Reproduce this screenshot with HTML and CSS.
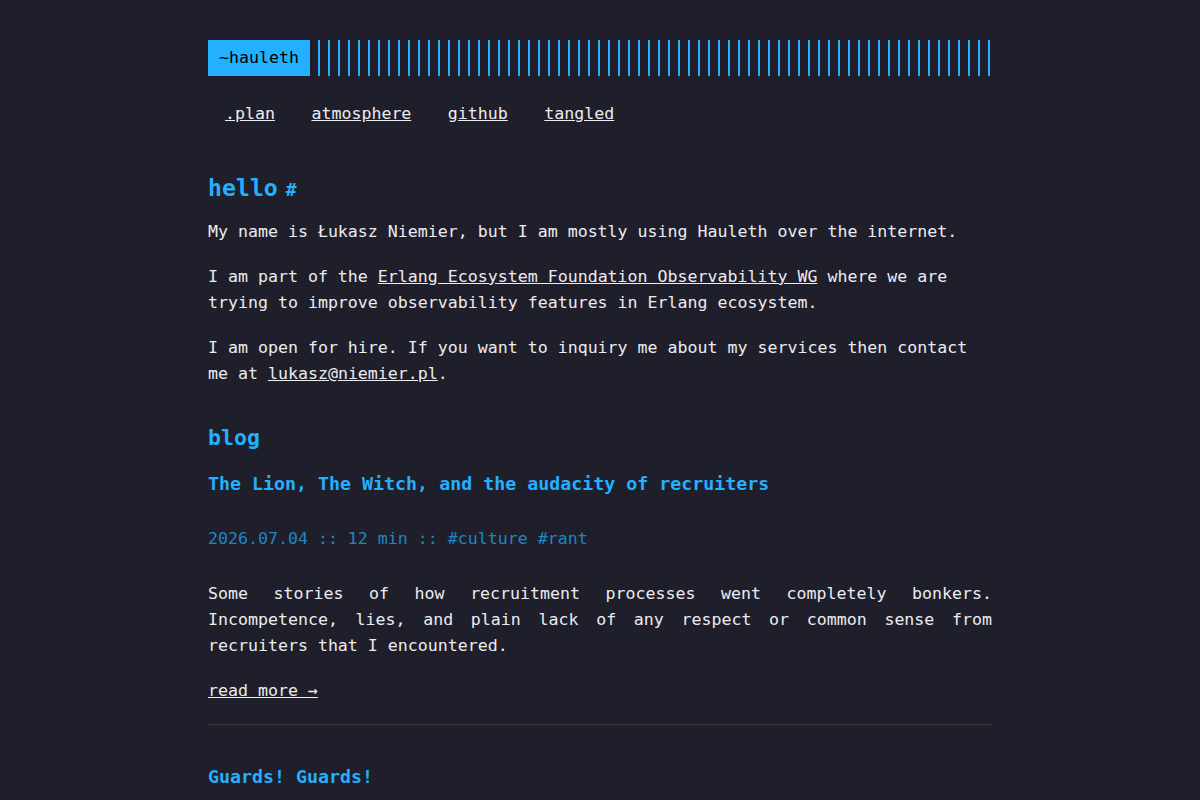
FILE: index.html
```html
<!DOCTYPE html>
<html lang="en">
<head>
    <meta charset="UTF-8">
    <meta name="viewport" content="width=device-width, initial-scale=1.0">
    <title>~hauleth</title>
    <link rel="stylesheet" href="styles.css">
</head>
<body>
    <div class="container">
        <header class="header">
            <div class="header__logo">
                <a class="logo" href="#">~hauleth</a>
            </div>
            <nav class="menu">
                <a href="#">.plan</a>
                <a href="#">atmosphere</a>
                <a href="#">github</a>
                <a href="#">tangled</a>
            </nav>
        </header>

        <main class="content">
            <h1 id="hello">hello<a class="anchor" href="#hello">#</a></h1>
            <p>My name is Łukasz Niemier, but I am mostly using Hauleth over the internet.</p>
            <p>I am part of the <a href="#">Erlang Ecosystem Foundation Observability WG</a> where we are trying to improve observability features in Erlang ecosystem.</p>
            <p>I am open for hire. If you want to inquiry me about my services then contact me at <a href="#">lukasz@niemier.pl</a>.</p>

            <h2>blog</h2>
            <article class="post">
                <h3 class="post-title"><a href="#">The Lion, The Witch, and the audacity of recruiters</a></h3>
                <div class="post-meta">2026.07.04 :: 12 min :: <a href="#">#culture</a> <a href="#">#rant</a></div>
                <div class="post-content">Some stories of how recruitment processes went completely bonkers. Incompetence, lies, and plain lack of any respect or common sense from recruiters that I encountered.</div>
                <a class="read-more" href="#">read more →</a>
            </article>
            <article class="post">
                <h3 class="post-title"><a href="#">Guards! Guards!</a></h3>
            </article>
        </main>
    </div>
</body>
</html>
```

FILE: styles.css
```css
:root {
    --background: #1f1f2b;
    --foreground: #ececf0;
    --accent: #23b0ff;
    --accent-dim: #1f86c4;
    --border: #393944;
}

html,
body {
    margin: 0;
    padding: 0;
}

body {
    background: var(--background);
    color: var(--foreground);
    font-family: "DejaVu Sans Mono", monospace;
    font-size: 16.6px;
    line-height: 26px;
}

a {
    color: inherit;
}

.container {
    width: 784px;
    margin: 0 auto;
    padding-top: 40px;
}

/* header */

.header__logo {
    display: flex;
}

.header__logo::after {
    content: "";
    flex: 1;
    margin-left: 8px;
    background: repeating-linear-gradient(90deg, var(--accent), var(--accent) 2px, transparent 2px, transparent 10px);
}

.logo {
    display: block;
    background: var(--accent);
    color: #000;
    text-decoration: none;
    padding: 5px 11px;
    line-height: 26px;
}

.menu {
    display: flex;
    gap: 36.5px;
    padding-left: 17px;
    margin-top: 25px;
}

/* content */

.content {
    margin-top: 46px;
}

h1,
h2,
h3 {
    color: var(--accent);
    font-weight: bold;
    margin: 0;
}

h1 {
    font-size: 23.2px;
    line-height: 30px;
    margin-bottom: 14px;
}

h1 .anchor {
    font-size: 18px;
    margin-left: 8px;
    text-decoration: none;
}

h2 {
    font-size: 21.6px;
    line-height: 30px;
    margin-top: 36px;
    margin-bottom: 17px;
}

p {
    margin: 0 0 19px;
}

.post-title {
    font-size: 18.3px;
    line-height: 28px;
}

.post-title a {
    text-decoration: none;
}

.post-meta {
    color: var(--accent-dim);
    margin-top: 28px;
}

.post-meta a {
    text-decoration: none;
}

.post-content {
    text-align: justify;
    margin-top: 29px;
}

.read-more {
    display: inline-block;
    margin-top: 19px;
}

.post + .post {
    border-top: 1px solid var(--border);
    margin-top: 20px;
    padding-top: 38px;
}
```
